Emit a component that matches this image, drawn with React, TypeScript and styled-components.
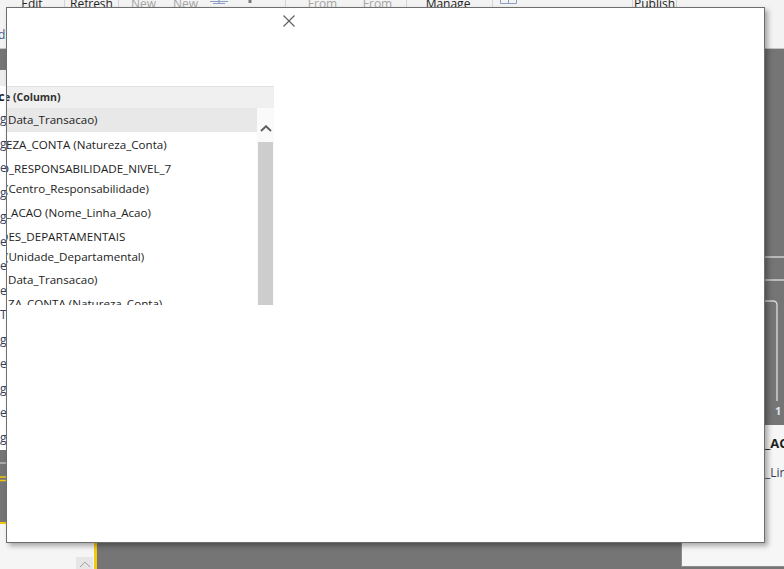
import React from "react";
import styled, { createGlobalStyle } from "styled-components";

const Global = createGlobalStyle`
  html, body { margin: 0; padding: 0; }
  body {
    width: 784px; height: 569px; overflow: hidden;
    font-family: "Open Sans", "Noto Sans", sans-serif;
  }
  #root { width: 784px; height: 569px; }
`;

const Screen = styled.div`
  position: relative;
  width: 784px;
  height: 569px;
  overflow: hidden;
  display: flex;
  flex-direction: column;
  background: #757575;
`;

/* ---------- Ribbon ---------- */
const Ribbon = styled.div`
  flex: none;
  height: 48px;
  background: #f3f3f3;
  border-bottom: 1px solid #c4c4c4;
  display: flex;
  align-items: stretch;
`;

const Group = styled.div<{ $w?: number; $last?: boolean }>`
  box-sizing: border-box;
  ${(p) => (p.$w ? `width: ${p.$w}px; flex: none;` : "flex: 1;")}
  border-right: ${(p) => (p.$last ? "none" : "1px solid #d4d4d4")};
  display: flex;
  flex-direction: column;
  justify-content: space-between;
`;

const SlotRow = styled.div<{ $center?: boolean }>`
  display: flex;
  justify-content: ${(p) => (p.$center ? "center" : "flex-start")};
`;

const Slot = styled.div<{ $w?: number; $muted?: boolean }>`
  ${(p) => (p.$w ? `width: ${p.$w}px; flex: none;` : "")}
  display: flex;
  justify-content: center;
  margin-top: -3px;
  font-size: 12px;
  line-height: 14px;
  white-space: nowrap;
  color: ${(p) => (p.$muted ? "#a6a6a6" : "#252423")};
`;

const IconSlot = styled.div<{ $w: number }>`
  width: ${(p) => p.$w}px;
  flex: none;
  display: flex;
  justify-content: center;
  align-items: flex-start;
`;

const GroupLabel = styled.div`
  font-size: 12px;
  line-height: 16px;
  color: #3c5b8c;
  margin: 0 0 5px -2px;
`;

/* ---------- Canvas (model diagram) ---------- */
const Canvas = styled.div`
  flex: 1;
  position: relative;
  background: #757575;
`;

const Lines = styled.svg`
  position: absolute;
  left: 0;
  top: 0;
  width: 784px;
  height: 520px;
  pointer-events: none;
`;

const Card = styled.div<{ $x: number; $y: number; $w: number; $h: number }>`
  position: absolute;
  left: ${(p) => p.$x}px;
  top: ${(p) => p.$y}px;
  width: ${(p) => p.$w}px;
  height: ${(p) => p.$h}px;
  box-sizing: border-box;
  display: flex;
  flex-direction: column;
`;

const LeftCard = styled(Card)`
  background: #ffffff;
`;

const CardHeader = styled.div`
  height: 19px;
  background: #ececec;
`;

const CardTitle = styled.div<{ $pad: number }>`
  height: 21px;
  line-height: 21px;
  padding-left: ${(p) => p.$pad}px;
  font-size: 13px;
  font-weight: 700;
  color: #1f1f1f;
  white-space: nowrap;
`;

const FieldLine = styled.div<{ $pad: number; $h?: number; $gap?: number }>`
  height: ${(p) => p.$h ?? 24.5}px;
  line-height: ${(p) => p.$h ?? 24.5}px;
  margin-top: ${(p) => p.$gap ?? 0}px;
  padding-left: ${(p) => p.$pad}px;
  font-size: 12px;
  color: #33415c;
  white-space: nowrap;
`;

const SelectedCard = styled(Card)`
  background: #f5f5f5;
  border-top: 2px solid #f2c811;
  border-right: 3px solid #f2c811;
  align-items: flex-end;
  padding: 33px 1px 0 0;
`;

const MiniScroll = styled.div`
  width: 17px;
  height: 14px;
  background: #e6e6e6;
  display: flex;
  justify-content: center;
  align-items: center;
`;

const RightCard = styled(Card)`
  background: #f6f6f6;
  border-left: 1px solid #8c8c8c;
  border-bottom: 1px solid #8c8c8c;
  padding-top: 8px;
`;

const Cardinality = styled.span`
  position: absolute;
  left: 775px;
  top: 355px;
  font-size: 11px;
  font-weight: 700;
  line-height: 14px;
  color: #dce6f4;
`;

/* ---------- Modal ---------- */
const Modal = styled.div`
  position: absolute;
  left: 6px;
  top: 7px;
  width: 759px;
  height: 536px;
  box-sizing: border-box;
  background: #ffffff;
  border: 1px solid #6e6e6e;
  box-shadow: 3px 3px 5px rgba(0, 0, 0, 0.32);
  overflow: hidden;
`;

const Pane = styled.div`
  width: 293px;
  display: flex;
  flex-direction: column;
`;

const CloseRow = styled.div`
  display: flex;
  justify-content: flex-end;
  padding-top: 2px;
`;

const CloseButton = styled.button`
  width: 22px;
  height: 22px;
  padding: 0;
  border: none;
  background: transparent;
  display: grid;
  place-items: center;
`;

const List = styled.div`
  margin-top: 54px;
  width: 267px;
  display: flex;
  flex-direction: column;
`;

const ListHeader = styled.div`
  height: 21px;
  line-height: 21px;
  border-top: 1px solid #e2e2e2;
  background: #f0f0f0;
  font-size: 10.5px;
  font-weight: 700;
  color: #303030;
  white-space: nowrap;
`;

const ListBody = styled.div`
  height: 197px;
  display: flex;
  overflow: hidden;
`;

const Rows = styled.div`
  width: 250px;
  display: flex;
  flex-direction: column;
`;

const Row = styled.div<{ $selected?: boolean }>`
  flex: none;
  padding: 2px 0;
  background: ${(p) => (p.$selected ? "#e8e8e8" : "transparent")};
  font-size: 11.6px;
  line-height: 20px;
  color: #222222;
  white-space: nowrap;
`;

const Line = styled.span<{ $indent: number; $nudge?: number }>`
  display: block;
  margin-left: ${(p) => p.$indent}px;
  position: relative;
  top: ${(p) => p.$nudge ?? 0}px;
`;

const HeaderText = styled(Line)``;

const Scrollbar = styled.div`
  width: 17px;
  background: #fafafa;
  display: flex;
  flex-direction: column;
  padding-top: 12px;
`;

const ScrollUp = styled.div`
  height: 17px;
  display: grid;
  place-items: center;
`;

const Thumb = styled.div`
  flex: 1;
  margin: 5px 1px 0 1px;
  background: #cdcdcd;
`;

type Item = { lines: { text: string; indent: number }[]; selected?: boolean };

const items: Item[] = [
  { lines: [{ text: "Data_Transacao)", indent: 1 }], selected: true },
  { lines: [{ text: "EZA_CONTA (Natureza_Conta)", indent: -1 }] },
  {
    lines: [
      { text: "O_RESPONSABILIDADE_NIVEL_7", indent: -7 },
      { text: "(Centro_Responsabilidade)", indent: -2 },
    ],
  },
  { lines: [{ text: "_ACAO (Nome_Linha_Acao)", indent: -1 }] },
  {
    lines: [
      { text: "DES_DEPARTAMENTAIS", indent: -7 },
      { text: "(Unidade_Departamental)", indent: -2 },
    ],
  },
  { lines: [{ text: "Data_Transacao)", indent: 1 }] },
  { lines: [{ text: "ZA_CONTA (Natureza_Conta)", indent: 1 }] },
];

const leftFields = ["go", "go", "e_", "go", "go", "e_", "er", "e_", "T", "go", "e_", "go", "e_", "go"];

const Chevron = ({ color, w = 2 }: { color: string; w?: number }) => (
  <svg width="12" height="7" viewBox="0 0 12 7">
    <polyline points="1,6 6,1.2 11,6" fill="none" stroke={color} strokeWidth={w} />
  </svg>
);

export default function App() {
  return (
    <>
      <Global />
      <Screen>
        <Ribbon>
          <Group $w={65}>
            <SlotRow $center>
              <Slot>Edit</Slot>
            </SlotRow>
            <GroupLabel>d</GroupLabel>
          </Group>
          <Group $w={54}>
            <SlotRow $center>
              <Slot>Refresh</Slot>
            </SlotRow>
          </Group>
          <Group $w={167}>
            <SlotRow>
              <Slot $w={49} $muted>New</Slot>
              <Slot $w={35} $muted>New</Slot>
              <IconSlot $w={31}>
                <svg width="18" height="4" viewBox="0 0 18 4">
                  <path d="M0 1.5H18M9 0V4M3 3.5H15" stroke="#8a9fc2" strokeWidth="1.2" fill="none" />
                </svg>
              </IconSlot>
              <IconSlot $w={32}>
                <svg width="4" height="4" viewBox="0 0 4 4">
                  <rect x="0.5" y="0" width="3" height="3" fill="#7a7a7a" />
                </svg>
              </IconSlot>
            </SlotRow>
          </Group>
          <Group $w={121}>
            <SlotRow>
              <Slot $w={73} $muted>From</Slot>
              <Slot $w={37} $muted>From</Slot>
            </SlotRow>
          </Group>
          <Group $w={86}>
            <SlotRow>
              <Slot $w={82}>Manage</Slot>
            </SlotRow>
          </Group>
          <Group $w={140}>
            <SlotRow>
              <IconSlot $w={30}>
                <svg width="17" height="4" viewBox="0 0 17 4">
                  <path d="M0.5 0V3.5H16.5V0M8.5 0V3.5" stroke="#8a9fc2" strokeWidth="1" fill="none" />
                </svg>
              </IconSlot>
            </SlotRow>
          </Group>
          <Group $w={44}>
            <SlotRow $center>
              <Slot>Publish</Slot>
            </SlotRow>
          </Group>
          <Group $last />
        </Ribbon>

        <Canvas>
          <Lines viewBox="0 0 784 520">
            <line x1="-10" y1="414" x2="80" y2="414" stroke="#dcdcdc" strokeWidth="1.2" />
            <line x1="-10" y1="428" x2="80" y2="428" stroke="#f2c811" strokeWidth="1.5" />
            <line x1="-10" y1="431.5" x2="80" y2="431.5" stroke="#f2c811" strokeWidth="1.5" />
            <line x1="700" y1="208" x2="790" y2="208" stroke="#d2d2d2" strokeWidth="1.6" />
            <line x1="700" y1="231" x2="790" y2="231" stroke="#d2d2d2" strokeWidth="1.6" />
            <path d="M700 252 H773 Q777 252 777 256 V352" stroke="#d6d6d6" strokeWidth="1.4" fill="none" />
          </Lines>

          <LeftCard $x={-6} $y={21} $w={110} $h={380}>
            <CardHeader />
            <CardTitle $pad={4}>c</CardTitle>
            {leftFields.map((f, i) => (
              <FieldLine key={i} $pad={6}>
                {f}
              </FieldLine>
            ))}
          </LeftCard>

          <SelectedCard $x={-100} $y={473} $w={197} $h={70}>
            <MiniScroll>
              <Chevron color="#a0a0a0" w={1} />
            </MiniScroll>
          </SelectedCard>

          <RightCard $x={681} $y={376} $w={120} $h={142}>
            <CardTitle $pad={83}>_ACAO</CardTitle>
            <FieldLine $pad={83} $h={20} $gap={9}>
              _Linha_Acao
            </FieldLine>
          </RightCard>

          <Cardinality>1</Cardinality>
        </Canvas>

        <Modal>
          <Pane>
            <CloseRow>
              <CloseButton aria-label="Close">
                <svg width="12" height="12" viewBox="0 0 12 12">
                  <path d="M0.5 0.5L11.5 11.5M11.5 0.5L0.5 11.5" stroke="#5c5c5c" strokeWidth="1.1" fill="none" />
                </svg>
              </CloseButton>
            </CloseRow>
            <List>
              <ListHeader>
                <HeaderText $indent={-3}>e (Column)</HeaderText>
              </ListHeader>
              <ListBody>
                <Rows>
                  {items.map((it, i) => (
                    <Row key={i} $selected={it.selected}>
                      {it.lines.map((l, j) => (
                        <Line key={j} $indent={l.indent} $nudge={i > 0 && i < 5 ? 1 : 0}>
                          {l.text}
                        </Line>
                      ))}
                    </Row>
                  ))}
                </Rows>
                <Scrollbar>
                  <ScrollUp>
                    <Chevron color="#5f5f5f" w={1.9} />
                  </ScrollUp>
                  <Thumb />
                </Scrollbar>
              </ListBody>
            </List>
          </Pane>
        </Modal>
      </Screen>
    </>
  );
}
